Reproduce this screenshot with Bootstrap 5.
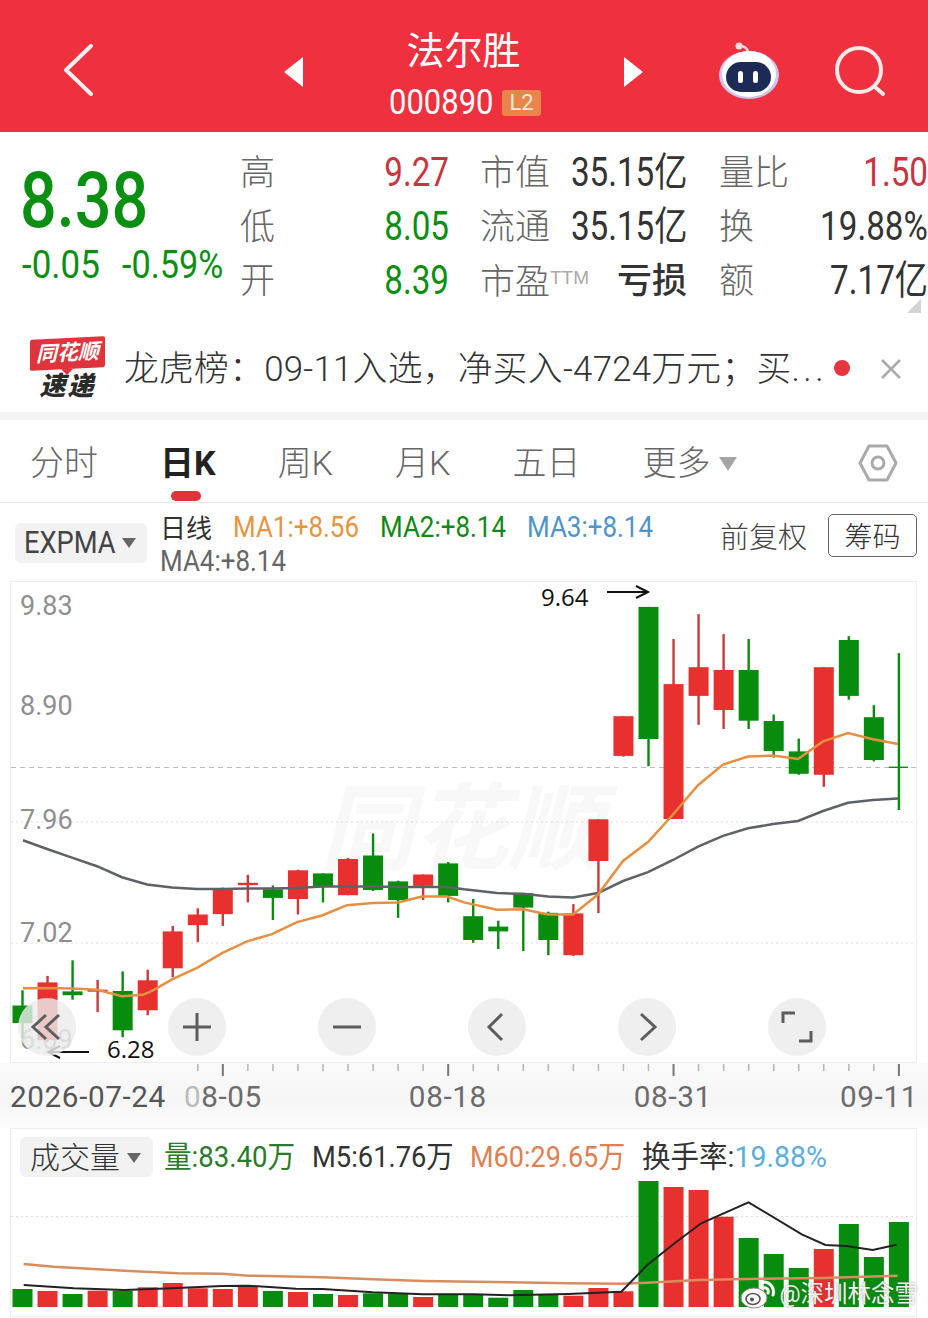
<!DOCTYPE html>
<html lang="zh-CN">
<head>
<meta charset="UTF-8">
<title>法尔胜</title>
<link href="https://cdn.jsdelivr.net/npm/bootstrap@5.3.0/dist/css/bootstrap.min.css" rel="stylesheet">
<style>
  html, body { margin: 0; width: 928px; height: 1318px; overflow: hidden; background: #fff; }
  body { font-family: Roboto, "Noto Sans CJK SC", sans-serif; color: #333; }
  .cjk-text { font-family: "Noto Sans CJK SC", sans-serif; }
  /* 行情数字是窄体，这里没有窄体字，横向压一下 */
  .squeeze { display: inline-block; white-space: nowrap; transform-origin: left center; }
  .squeeze-r { display: inline-block; white-space: nowrap; transform-origin: right center; }

  /* 顶栏 */
  .top-bar { height: 132px; background: #ef303e; color: #fff; }
  .top-center { width: 321px; line-height: 1; padding-top: 19px; }
  .stock-name { font-size: 38px; margin-top: -2px; }
  .stock-code { font-size: 35px; margin-top: 18px; margin-left: 3px; gap: 10px; }
  .code-text { width: 103px; text-align: left; transform: scaleX(.885); }
  .l2-tag { font-size: 22px; background: #e9854a; border-radius: 3px; width: 39px; height: 26px; line-height: 26px; text-align: center; color: #ffe9d6; }
  .ml-back { margin-left: 63px; margin-top: 8px; }
  .ml-prev { margin-left: 191px; margin-top: 12px; }
  .ml-next { margin-top: 12px; }
  .ml-robot { margin-left: 75px; margin-top: 10px; }
  .ml-search { margin-left: 55px; margin-top: 12px; }

  /* 报价 */
  .quote-box { height: 193px; position: relative; }
  .quote-left { width: 240px; padding: 30px 0 0 20px; }
  .last-price { font-size: 77px; line-height: 78px; color: #0a8f12; font-weight: 500; transform: scaleX(.84); }
  .price-change { font-size: 38px; color: #0a8f12; margin-top: 2px; margin-left: 2px; line-height: 46px; }
  .change-a { width: 100px; transform: scaleX(.92); }
  .change-b { width: 102px; transform: scaleX(.9); }
  .quote-grid { display: grid; grid-template-columns: 60px 149px 111px 127px 113px 128px; grid-auto-rows: 54px; padding-top: 14px; width: 688px; }
  .quote-grid > div { font-size: 40px; line-height: 54px; white-space: nowrap; }
  .quote-grid > .q-label { font-size: 35px; line-height: 48px; color: #666; font-family: "Noto Sans CJK SC", sans-serif; font-weight: 300; }
  .quote-grid > .q-loss { font-size: 35px; line-height: 48px; font-weight: 500; font-family: "Noto Sans CJK SC", sans-serif; text-align: right; }
  .q-val { display: flex; justify-content: flex-end; }
  .q-val .squeeze-r { transform: scaleX(.83); flex-shrink: 0; }
  .q-gap { margin-left: 31px; }
  .q-gap2 { margin-left: 32px; }
  .q-red { color: #c8343f; }
  .q-green { color: #0a8f12; }
  .ttm { font-size: 19px; color: #aaa; vertical-align: 10px; font-family: "Liberation Sans", sans-serif; }
  .corner-mark { position: absolute; right: 7px; bottom: 12px; width: 0; height: 0; border-left: 14px solid transparent; border-bottom: 14px solid #d4d4d4; }

  /* 速递 */
  .ticker-box { height: 87px; padding-left: 30px; }
  .brand-mark { width: 75px; line-height: 1; font-style: italic; font-weight: 700; text-align: center; }
  .brand-top { position: relative; background: #e0343c; color: #fff; font-size: 21px; height: 31px; line-height: 31px; border-radius: 2px; transform: skewY(-3deg); }
  .brand-top::after { content: ""; position: absolute; left: 31px; bottom: -6px; width: 0; height: 0; border-left: 6px solid transparent; border-right: 6px solid transparent; border-top: 6px solid #e0343c; }
  .brand-bottom { color: #2b2b2b; font-size: 26px; margin-top: 4px; letter-spacing: 2px; font-weight: 900; }
  .ticker-text { font-size: 34.8px; margin-left: 19px; margin-top: 2px; width: 710px; white-space: nowrap; font-weight: 300; letter-spacing: .25px; }
  .ticker-dots { letter-spacing: 3.5px; }
  .ticker-dot { width: 16px; height: 16px; background: #e8343f; border-radius: 50%; margin-top: -2px; }
  .ticker-close { margin-left: 30px; }
  .gray-strip { height: 8px; background: #f5f5f5; }

  /* 周期切换 */
  .period-tabs { height: 83px; padding-left: 30px; gap: 62px; border-bottom: 1px solid #e6e6e6; position: relative; align-items: center; }
  .period-tabs .nav-link { padding: 0; font-size: 34px; line-height: 40px; color: #666; font-weight: 300; position: relative; margin-top: 3px; }
  .period-tabs .nav-link.active { color: #222; font-weight: 700; }
  .active-bar { position: absolute; left: 11px; top: 48px; width: 30px; height: 10px; border-radius: 5px; background: #e0333a; }
  .more-arrow { display: inline-block; width: 0; height: 0; margin-left: 8px; border-left: 9px solid transparent; border-right: 9px solid transparent; border-top: 14px solid #a5a5a5; vertical-align: 4px; }
  .gear-icon { position: absolute; left: 858px; top: 23px; }

  /* 指标行 */
  .indicator-row { height: 78px; position: relative; padding-left: 15px; }
  .select-chip { background: #f2f2f2; border-radius: 6px; color: #444; }
  .chip-expma { width: 132px; height: 40px; font-size: 31px; margin-top: 20px; padding-left: 9px; line-height: 40px; white-space: nowrap; }
  .expma-text { width: 91px; transform: scaleX(.88); }
  .chip-arrow { display: inline-block; width: 0; height: 0; margin-left: 7px; border-left: 7px solid transparent; border-right: 7px solid transparent; border-top: 10px solid #666; vertical-align: 5px; }
  .ma-lines { margin-left: 13px; padding-top: 7px; font-size: 30px; line-height: 34px; }
  .ma-first { gap: 21px; }
  .ma-day { color: #333; font-size: 26px; font-family: "Noto Sans CJK SC", sans-serif; }
  .ma-lines .squeeze { width: 126px; transform: scaleX(.865); }
  .ma-1 { color: #e7943f; }
  .ma-2 { color: #0f8a14; }
  .ma-3 { color: #4f93cc; }
  .ma-4 { color: #666; }
  .ma-right { position: absolute; left: 720px; top: 11px; gap: 21px; }
  .adjust-text { font-size: 29px; color: #444; font-family: "Noto Sans CJK SC", sans-serif; font-weight: 300; }
  .chip-btn { width: 89px; height: 43px; line-height: 40px; border: 1px solid #666; border-radius: 5px; text-align: center; font-size: 28px; color: #333; font-family: "Noto Sans CJK SC", sans-serif; font-weight: 300; }

  /* K线 */
  .kline-box { position: relative; height: 482px; width: 908px; margin-left: 10px; }
  .kline-box svg { display: block; overflow: visible; }
  .chart-text { font-family: Roboto, sans-serif; font-size: 27px; fill: #8f8f8f; }
  .note-text { font-family: "Open Sans", sans-serif; font-size: 24px; fill: #111; }
  .round-btns { position: absolute; left: 8px; top: 417px; gap: 92px; }
  .round-btn { width: 58px; height: 58px; background: rgba(236,236,236,.82); }

  /* 时间轴 */
  .axis-box { height: 65px; background: linear-gradient(#fafafa, #f6f6f6 60%, #fdfdfd); }
  .axis-box svg { display: block; }
  .axis-labels { font-size: 29.7px; letter-spacing: .6px; color: #6b6b6b; margin-top: 1px; line-height: 36px; }
  .axis-first { margin-left: 10px; color: #555; }
  .axis-gap { margin-left: 18px; }
  .axis-gap2 { margin-left: 147px; }
  .axis-last { margin-left: auto; margin-right: 10px; }
  .axis-fade { color: #bbb; }

  /* 成交量 */
  .volume-box { position: relative; height: 190px; width: 908px; margin-left: 10px; }
  .volume-head { position: absolute; left: 10px; top: 9px; font-size: 30px; line-height: 40px; white-space: nowrap; }
  .chip-vol { width: 133px; height: 40px; padding-left: 10px; font-size: 30px; line-height: 36px; font-family: "Noto Sans CJK SC", sans-serif; font-weight: 300; color: #333; margin-right: 11px; }
  .vol-a { width: 148px; transform: scaleX(.92); }
  .vol-b { width: 158px; transform: scaleX(.91); }
  .vol-c { width: 172px; transform: scaleX(.9); }
  .vol-d { width: 190px; transform: scaleX(.95); }
  .vol-green { color: #2c7a2c; }
  .vol-dark { color: #333; }
  .vol-orange { color: #df8053; }
  .vol-blue { color: #5aaedc; }
  .weibo-mark { position: absolute; right: 0; top: 151px; gap: 3px; color: rgba(255,255,255,.92); font-size: 23.5px; line-height: 28px; text-shadow: 0 0 2px rgba(90,90,90,.7); }
</style>
</head>
<body>

<!-- 顶栏 -->
<div class="top-bar d-flex align-items-center">
  <svg class="ml-back" width="30" height="54" viewBox="0 0 30 54"><polyline points="28,3 3,27 28,51" fill="none" stroke="#fff" stroke-width="4" stroke-linecap="round" stroke-linejoin="round" opacity=".92"/></svg>
  <svg class="ml-prev" width="19" height="30" viewBox="0 0 19 30"><polygon points="19,0 19,30 0,15" fill="#fff"/></svg>
  <div class="top-center text-center">
    <div class="stock-name cjk-text">法尔胜</div>
    <div class="stock-code d-flex justify-content-center align-items-center">
      <span class="squeeze code-text">000890</span><span class="l2-tag">L2</span>
    </div>
  </div>
  <svg class="ml-next" width="19" height="30" viewBox="0 0 19 30"><polygon points="0,0 0,30 19,15" fill="#fff"/></svg>
  <svg class="ml-robot" width="62" height="58" viewBox="0 0 62 58">
    <path d="M22 4 C26 4 29 6 30 10" fill="none" stroke="#f3d6dc" stroke-width="2.5"/>
    <circle cx="21" cy="4" r="3.5" fill="#f7dde2"/>
    <ellipse cx="31" cy="33" rx="30" ry="24" fill="#c9c6f0"/>
    <ellipse cx="31" cy="32" rx="27" ry="23" fill="#fff"/>
    <rect x="8" y="20" width="45" height="30" rx="15" fill="#1d2a55"/>
    <rect x="20" y="29" width="5" height="12" rx="2.5" fill="#fff"/>
    <rect x="35" y="29" width="5" height="12" rx="2.5" fill="#fff"/>
  </svg>
  <svg class="ml-search" width="52" height="52" viewBox="0 0 52 52"><circle cx="24" cy="24" r="22" fill="none" stroke="#ffeaea" stroke-width="4"/><line x1="40" y1="41" x2="48" y2="48" stroke="#ffeaea" stroke-width="4" stroke-linecap="round"/></svg>
</div>

<!-- 报价 -->
<div class="quote-box d-flex">
  <div class="quote-left">
    <div class="last-price squeeze">8.38</div>
    <div class="price-change d-flex"><span class="squeeze change-a">-0.05</span><span class="squeeze change-b">-0.59%</span></div>
  </div>
  <div class="quote-grid">
    <div class="q-label">高</div><div class="q-val q-red"><span class="squeeze-r">9.27</span></div>
    <div class="q-label q-gap">市值</div><div class="q-val"><span class="squeeze-r">35.15亿</span></div>
    <div class="q-label q-gap2">量比</div><div class="q-val q-red"><span class="squeeze-r">1.50</span></div>

    <div class="q-label">低</div><div class="q-val q-green"><span class="squeeze-r">8.05</span></div>
    <div class="q-label q-gap">流通</div><div class="q-val"><span class="squeeze-r">35.15亿</span></div>
    <div class="q-label q-gap2">换</div><div class="q-val"><span class="squeeze-r">19.88%</span></div>

    <div class="q-label">开</div><div class="q-val q-green"><span class="squeeze-r">8.39</span></div>
    <div class="q-label q-gap">市盈<span class="ttm">TTM</span></div><div class="q-loss">亏损</div>
    <div class="q-label q-gap2">额</div><div class="q-val"><span class="squeeze-r">7.17亿</span></div>
  </div>
  <div class="corner-mark"></div>
</div>

<!-- 速递 -->
<div class="ticker-box d-flex align-items-center">
  <div class="brand-mark">
    <div class="brand-top">同花顺</div>
    <div class="brand-bottom">速递</div>
  </div>
  <div class="ticker-text">龙虎榜：09-11入选，净买入-4724万元；买<span class="ticker-dots">...</span></div>
  <div class="ticker-dot"></div>
  <svg class="ticker-close" width="22" height="22" viewBox="0 0 22 22"><path d="M2 2 L20 20 M20 2 L2 20" stroke="#aaa" stroke-width="2.5"/></svg>
</div>
<div class="gray-strip"></div>

<!-- 周期切换 -->
<div class="nav period-tabs">
  <a class="nav-link">分时</a>
  <a class="nav-link active">日K<span class="active-bar"></span></a>
  <a class="nav-link">周K</a>
  <a class="nav-link">月K</a>
  <a class="nav-link">五日</a>
  <a class="nav-link">更多<span class="more-arrow"></span></a>
  <svg class="gear-icon" width="40" height="40" viewBox="0 0 40 40"><polygon points="11,3 29,3 38,20 29,37 11,37 2,20" fill="none" stroke="#aaa" stroke-width="3" stroke-linejoin="round"/><circle cx="20" cy="20" r="6" fill="none" stroke="#aaa" stroke-width="3"/></svg>
</div>

<!-- 指标行 -->
<div class="indicator-row d-flex">
  <div class="select-chip chip-expma"><span class="squeeze expma-text">EXPMA</span><span class="chip-arrow"></span></div>
  <div class="ma-lines">
    <div class="d-flex ma-first">
      <span class="ma-day">日线</span>
      <span class="squeeze ma-1">MA1:+8.56</span>
      <span class="squeeze ma-2">MA2:+8.14</span>
      <span class="squeeze ma-3">MA3:+8.14</span>
    </div>
    <div class="squeeze ma-4">MA4:+8.14</div>
  </div>
  <div class="ma-right d-flex align-items-center">
    <span class="adjust-text">前复权</span>
    <span class="chip-btn">筹码</span>
  </div>
</div>

<!-- K线 -->
<div class="kline-box">
  <svg id="klineSvg" width="908" height="482" viewBox="10 581 908 482"></svg>
  <div class="round-btns d-flex">
    <div class="round-btn rounded-circle d-flex align-items-center justify-content-center"><svg width="36" height="36" viewBox="0 0 36 36"><path d="M17 6 L4 18 L17 30 M30 6 L17 18 L30 30" fill="none" stroke="#5d5d5d" stroke-width="3"/></svg></div>
    <div class="round-btn rounded-circle d-flex align-items-center justify-content-center"><svg width="30" height="30" viewBox="0 0 30 30"><path d="M1 15 H29 M15 1 V29" stroke="#5d5d5d" stroke-width="3"/></svg></div>
    <div class="round-btn rounded-circle d-flex align-items-center justify-content-center"><svg width="30" height="30" viewBox="0 0 30 30"><path d="M1 15 H29" stroke="#5d5d5d" stroke-width="3"/></svg></div>
    <div class="round-btn rounded-circle d-flex align-items-center justify-content-center"><svg width="30" height="30" viewBox="0 0 30 30"><path d="M20 2 L7 15 L20 28" fill="none" stroke="#5d5d5d" stroke-width="3"/></svg></div>
    <div class="round-btn rounded-circle d-flex align-items-center justify-content-center"><svg width="30" height="30" viewBox="0 0 30 30"><path d="M9 2 L23 15 L9 28" fill="none" stroke="#5d5d5d" stroke-width="3"/></svg></div>
    <div class="round-btn rounded-circle d-flex align-items-center justify-content-center"><svg width="34" height="34" viewBox="0 0 34 34"><path d="M3 13 V3 H15 M31 21 V31 H19" fill="none" stroke="#5d5d5d" stroke-width="3"/></svg></div>
  </div>
</div>

<!-- 时间轴 -->
<div class="axis-box">
  <svg id="tickSvg" width="928" height="15" viewBox="0 0 928 15"></svg>
  <div class="axis-labels d-flex">
    <span class="axis-first">2026-07-24</span>
    <span class="axis-gap"><span class="axis-fade">0</span>8-05</span>
    <span class="axis-gap2">08-18</span>
    <span class="axis-gap2">08-31</span>
    <span class="axis-last">09-11</span>
  </div>
</div>

<!-- 成交量 -->
<div class="volume-box">
  <svg id="volSvg" width="908" height="190" viewBox="10 1128 908 190"></svg>
  <div class="volume-head d-flex">
    <div class="select-chip chip-vol">成交量<span class="chip-arrow"></span></div>
    <span class="squeeze vol-a vol-green">量:83.40万</span>
    <span class="squeeze vol-b vol-dark">M5:61.76万</span>
    <span class="squeeze vol-c vol-orange">M60:29.65万</span>
    <span class="squeeze vol-d vol-dark">换手率:<span class="vol-blue">19.88%</span></span>
  </div>
  <div class="weibo-mark d-flex align-items-center">
    <svg width="36" height="30" viewBox="0 0 36 30"><ellipse cx="14" cy="19" rx="13" ry="10" fill="#fff" stroke="#8a8a8a"/><ellipse cx="13" cy="20" rx="7" ry="5.5" fill="none" stroke="#555" stroke-width="1.6"/><circle cx="12" cy="20.5" r="2" fill="#555"/><path d="M22 3 C30 2 35 9 33 16 M23 9 C27 8 29 11 28 14" fill="none" stroke="#fff" stroke-width="3" stroke-linecap="round"/></svg>
    <span>@深圳林念雪</span>
  </div>
</div>

<script>
  const RED = "#e8302f", GREEN = "#078c0e";
  const cx = i => 22.5 + i * 25.04;
  // 抄图时的坐标：y 按 2.9 换算
  const py = v => +(580 + v / 2.9).toFixed(1);

  // [颜色, 上影, 下影, 实体上, 实体下]
  const CANDLES = [
    ["g",1190,1330,1234,1285],["r",1148,1340,1167,1335],["g",1103,1217,1193,1204],["r",1160,1253,1188,1194],
    ["g",1135,1326,1192,1306],["r",1130,1262,1161,1248],["r",1003,1152,1019,1126],["r",952,1050,970,1001],
    ["r",892,1003,897,969],["r",855,935,878,885],["g",886,986,897,922],["r",840,970,842,925],
    ["g",851,935,851,890],["r",806,914,809,914],["g",735,902,799,899],["g",872,980,874,928],
    ["r",854,928,854,887],["g",818,935,822,916],["g",925,1052,975,1044],["g",988,1070,1005,1019],
    ["g",908,1076,908,950],["g",962,1088,965,1044],["r",940,1090,967,1088],["r",694,966,694,815],
    ["r",395,512,395,510],["g",78,540,78,461],["r",171,693,302,693],["r",99,420,253,336],
    ["r",157,432,261,377],["g",171,432,261,408],["g",390,515,409,496],["g",460,565,497,562],
    ["r",253,600,253,565],["g",163,347,174,336],["g",363,526,398,522],["g",212,667,541,543]
  ];

  const MA_ORANGE = [[23,1184],[47,1183],[72,1185],[97,1188],[122,1207],[143,1203],[153,1190],[172,1158],[197,1125],[222,1082],[247,1048],[272,1027],[297,992],[322,973],[347,943],[373,937],[398,935],[422,918],[447,918],[464,935],[497,956],[523,955],[548,970],[573,970],[598,912],[623,815],[648,760],[673,680],[698,595],[723,535],[748,512],[773,509],[798,519],[823,468],[848,444],[873,462],[898,476]];
  const MA_GRAY = [[23,755],[47,780],[72,805],[97,830],[122,862],[147,883],[172,892],[197,896],[222,896],[247,895],[272,895],[297,893],[322,889],[347,889],[373,889],[398,890],[422,890],[447,890],[464,897],[497,908],[523,910],[548,918],[573,921],[598,908],[623,873],[648,847],[673,812],[698,773],[723,742],[748,720],[773,708],[798,699],[823,670],[848,646],[873,638],[898,634]];

  const linePoints = arr => arr.map(p => p[0] + "," + py(p[1])).join(" ");

  let k = "";
  k += '<rect x="10.5" y="581.5" width="906" height="481" fill="none" stroke="#eee"/>';
  k += '<text x="320" y="862" font-size="94" font-weight="700" font-style="italic" fill="#f8f8f8" font-family="Noto Sans CJK SC">同花顺</text>';
  k += '<line x1="11" x2="916" y1="767.5" y2="767.5" stroke="#bdbdbd" stroke-dasharray="5 4"/>';
  [822, 943].forEach(y => { k += `<line x1="11" x2="916" y1="${y}" y2="${y}" stroke="#dcdcdc" stroke-dasharray="2 3"/>`; });
  [["9.83",615],["8.90",715],["7.96",829],["7.02",942],["6.09",1049]].forEach(t => {
    k += `<text class="chart-text" x="20" y="${t[1]}">${t[0]}</text>`;
  });
  CANDLES.forEach((c, i) => {
    const col = c[0] === "r" ? RED : GREEN, x = cx(i);
    k += `<rect x="${x - 1.2}" y="${py(c[1])}" width="2.4" height="${py(c[2]) - py(c[1])}" fill="${col === RED ? "#c93a3e" : col}"/>`;
    if (i === 35) {
      k += `<rect x="${x - 10}" y="${py(c[3])}" width="19" height="1.4" fill="${col}"/>`;
    } else {
      k += `<rect x="${x - 10}" y="${py(c[3])}" width="20" height="${py(c[4]) - py(c[3])}" fill="${col}"/>`;
    }
  });
  k += `<polyline points="${linePoints(MA_GRAY)}" fill="none" stroke="#5e6266" stroke-width="2.5"/>`;
  k += `<polyline points="${linePoints(MA_ORANGE)}" fill="none" stroke="#e59040" stroke-width="2.5"/>`;
  k += '<text class="note-text" x="541" y="606">9.64</text>';
  k += '<path d="M607 592 H648 M636 586 L648 592 L636 598" fill="none" stroke="#111" stroke-width="2"/>';
  k += '<text class="note-text" x="107" y="1058">6.28</text>';
  k += '<path d="M89 1052 H48 M60 1046 L48 1052 L60 1058" fill="none" stroke="#111" stroke-width="2"/>';
  document.getElementById("klineSvg").innerHTML = k;

  let t = "";
  for (let i = 7; i <= 35; i++) {
    const major = (i - 8) % 9 === 0;
    t += `<rect x="${cx(i) - (major ? 1 : .75)}" y="1" width="${major ? 2 : 1.5}" height="${major ? 12 : 7}" fill="${major ? "#777" : "#b5b5b5"}"/>`;
  }
  document.getElementById("tickSvg").innerHTML = t;

  // 成交量柱: [颜色, 柱顶]
  const VOLS = [["g",507],["r",513],["g",522],["r",512],["g",512],["r",502],["r",489],["r",505],["r",507],["r",498],["g",513],["r",516],["g",522],["r",525],["g",520],["g",520],["r",531],["g",525],["g",525],["g",533],["g",510],["g",525],["r",527],["r",504],["r",514],["g",183],["r",201],["r",210],["r",290],["g",354],["g",402],["g",444],["r",387],["g",312],["g",411],["g",306]];
  const vy = v => +(1120 + v / 3).toFixed(1);
  const vx = v => +(v / 1.69).toFixed(1);
  const M5 = [[40,495],[125,505],[210,510],[290,505],[375,498],[420,497],[500,506],[545,507],[630,517],[715,523],[800,523],[860,526],[960,522],[1050,515],[1094,435],[1140,370],[1185,310],[1265,247],[1355,343],[1395,375],[1430,378],[1475,390],[1515,374]];
  const M60 = [[40,432],[90,440],[210,452],[300,460],[375,461],[420,467],[545,472],[630,478],[715,483],[860,487],[960,490],[1050,491],[1094,488],[1180,480],[1263,477],[1390,474],[1517,467]];
  const volPts = arr => arr.map(p => vx(p[0]) + "," + vy(p[1])).join(" ");

  let v = "";
  v += '<path d="M10.5 1318 V1128.5 H916.5 V1318" fill="none" stroke="#eee"/>';
  v += '<line x1="11" x2="916" y1="1216.5" y2="1216.5" stroke="#dcdcdc" stroke-dasharray="2 3"/>';
  v += '<line x1="11" x2="916" y1="1316.5" y2="1316.5" stroke="#eee"/>';
  VOLS.forEach((b, i) => {
    v += `<rect x="${cx(i) - 10}" y="${vy(b[1])}" width="20" height="${1307 - vy(b[1])}" fill="${b[0] === "r" ? RED : GREEN}"/>`;
  });
  v += `<polyline points="${volPts(M60)}" fill="none" stroke="#d98d5e" stroke-width="2.5"/>`;
  v += `<polyline points="${volPts(M5)}" fill="none" stroke="#222" stroke-width="2"/>`;
  document.getElementById("volSvg").innerHTML = v;
</script>
<script src="https://cdn.jsdelivr.net/npm/bootstrap@5.3.0/dist/js/bootstrap.bundle.min.js"></script>
</body>
</html>
